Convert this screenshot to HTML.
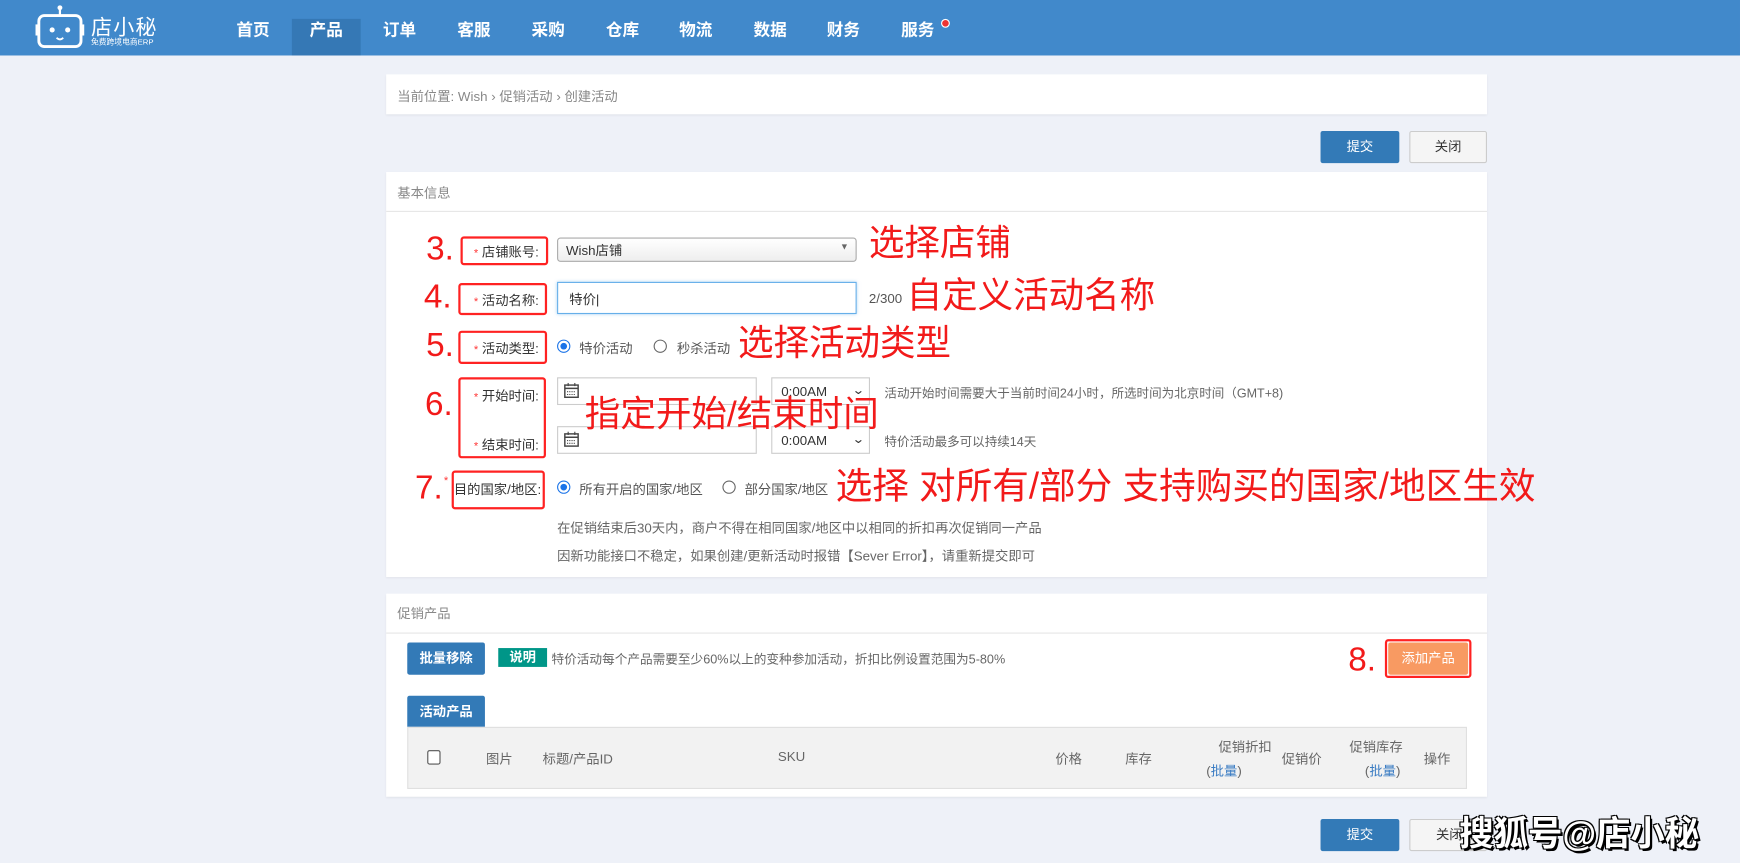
<!DOCTYPE html>
<html><head><meta charset="utf-8"><style>
*{box-sizing:border-box;margin:0;padding:0}
html,body{width:1740px;height:863px;overflow:hidden;background:#eef1f8;font-family:"Liberation Sans","Noto Sans CJK SC",sans-serif}
#w{position:absolute;left:0;top:0;width:1568px;height:778px;transform:scale(1.10969);transform-origin:0 0;background:#eef1f8}
.a{position:absolute;white-space:nowrap}
.hd{left:0;top:0;width:1568px;height:50px;background:#4189cb}
.nav{top:16px;color:#fff;font-size:15px;font-weight:bold}
.panel{background:#fff;position:absolute;left:348px;width:992px;box-shadow:0 1px 2px rgba(0,0,0,.06)}
.g{color:#888;font-size:12px}
.t{color:#555;font-size:12px}
.rb{position:absolute;border:2px solid #f22;border-radius:3px}
.ann{color:#f21a1a;font-size:32px;line-height:1}
.num{color:#f21a1a;font-size:30px;line-height:1}
.lab{font-size:12px;color:#333}
.lab b{color:#f33;font-weight:normal;font-size:10px}
.btn{position:absolute;font-size:12px;text-align:center;border-radius:2px}
.radio{position:absolute;width:12px;height:12px;border-radius:50%;border:1px solid #666;background:#fff}
.radio.on{border:1px solid #1a73e8}
.radio.on:after{content:"";position:absolute;left:2px;top:2px;width:6px;height:6px;border-radius:50%;background:#1a73e8}
.inp{position:absolute;border:1px solid #ccc;background:#fff}
.th{position:absolute;top:34px;font-size:12px;color:#666}
</style></head><body><div id="w">
<div class="a hd"></div>
<svg class="a" style="left:32px;top:3px" width="44" height="42" viewBox="0 0 44 42"><circle cx="22" cy="4" r="2.2" fill="#fff"/><line x1="22" y1="6" x2="22" y2="11" stroke="#fff" stroke-width="2"/><rect x="3" y="11" width="38" height="28" rx="5" fill="none" stroke="#fff" stroke-width="2.6"/><rect x="0" y="19" width="3" height="10" fill="#fff"/><rect x="41" y="19" width="3" height="10" fill="#fff"/><circle cx="15" cy="24" r="2.3" fill="#fff"/><circle cx="29" cy="24" r="2.3" fill="#fff"/><path d="M19 31 Q22 34 25 31" stroke="#fff" stroke-width="1.6" fill="none"/></svg>
<div class="a" style="left:82px;top:10px;color:#fff;font-size:19px;letter-spacing:1px">店小秘</div>
<div class="a" style="left:82px;top:33px;color:#fff;font-size:7px">免费跨境电商ERP</div>
<div class="a" style="left:263px;top:17px;width:62px;height:33px;background:#3578b5"></div>
<div class="a nav" style="left:213px">首页</div><div class="a nav" style="left:279px">产品</div><div class="a nav" style="left:345px">订单</div><div class="a nav" style="left:412px">客服</div><div class="a nav" style="left:479px">采购</div><div class="a nav" style="left:546px">仓库</div><div class="a nav" style="left:612px">物流</div><div class="a nav" style="left:679px">数据</div><div class="a nav" style="left:745px">财务</div><div class="a nav" style="left:812px">服务</div>
<div class="a" style="left:848px;top:17px;width:8px;height:8px;border-radius:50%;background:#e33;border:1px solid #fff"></div>

<div class="panel" style="top:67px;height:36px"><div class="a g" style="left:10px;top:11px">当前位置: Wish › 促销活动 › 创建活动</div></div>
<div class="btn" style="left:1190px;top:118px;width:71px;height:29px;background:#337ab7;color:#fff;line-height:29px">提交</div>
<div class="btn" style="left:1270px;top:118px;width:70px;height:29px;background:#f5f5f5;border:1px solid #ccc;color:#333;line-height:27px">关闭</div>

<div class="panel" style="top:155px;height:365px">
<div class="a g" style="left:10px;top:10px">基本信息</div>
<div class="a" style="left:0;top:35px;width:992px;height:1px;background:#e6e6e6"></div>
</div>
<!-- row 3 -->
<div class="a num" style="left:384px;top:210px">3.</div>
<div class="rb" style="left:415px;top:213px;width:79px;height:26px"></div>
<div class="a lab" style="left:427px;top:218px"><b>*</b> 店铺账号:</div>
<div class="inp" style="left:502px;top:214px;width:270px;height:22px;border-radius:3px;background:linear-gradient(#fff,#eee);border-color:#aaa"></div>
<div class="a" style="left:510px;top:217px;font-size:12px;color:#333">Wish店铺</div>
<div class="a" style="left:757px;top:218px;font-size:8px;color:#666">▼</div>
<div class="a ann" style="left:783px;top:203px">选择店铺</div>
<!-- row 4 -->
<div class="a num" style="left:382px;top:253px">4.</div>
<div class="rb" style="left:413px;top:255px;width:80px;height:29px"></div>
<div class="a lab" style="left:427px;top:262px"><b>*</b> 活动名称:</div>
<div class="inp" style="left:502px;top:254px;width:270px;height:29px;border-color:#66afe9;box-shadow:0 0 3px rgba(102,175,233,.6)"></div>
<div class="a" style="left:513px;top:261px;font-size:12px;color:#333">特价|</div>
<div class="a t" style="left:783px;top:262px">2/300</div>
<div class="a ann" style="left:817px;top:250px">自定义活动名称</div>
<!-- row 5 -->
<div class="a num" style="left:384px;top:297px">5.</div>
<div class="rb" style="left:413px;top:298px;width:80px;height:30px"></div>
<div class="a lab" style="left:427px;top:305px"><b>*</b> 活动类型:</div>
<div class="radio on" style="left:502px;top:306px"></div><div class="a t" style="left:522px;top:305px">特价活动</div>
<div class="radio" style="left:589px;top:306px"></div><div class="a t" style="left:610px;top:305px">秒杀活动</div>
<div class="a ann" style="left:665px;top:293px">选择活动类型</div>
<!-- row 6 -->
<div class="a num" style="left:383px;top:350px">6.</div>
<div class="rb" style="left:413px;top:340px;width:79px;height:73px"></div>
<div class="a lab" style="left:427px;top:348px"><b>*</b> 开始时间:</div>
<div class="a lab" style="left:427px;top:392px"><b>*</b> 结束时间:</div>
<div class="inp" style="left:502px;top:340px;width:180px;height:25px"></div>
<div class="inp" style="left:502px;top:384px;width:180px;height:25px"></div>
<svg class="a" style="left:508px;top:345px" width="14" height="14" viewBox="0 0 14 14"><rect x="1" y="2" width="12" height="11" fill="none" stroke="#444" stroke-width="1.3"/><line x1="1" y1="5" x2="13" y2="5" stroke="#444" stroke-width="1.3"/><line x1="4" y1="0" x2="4" y2="3" stroke="#444"/><line x1="10" y1="0" x2="10" y2="3" stroke="#444"/><path d="M3 8h8M3 10.5h8" stroke="#444" stroke-dasharray="1 1"/></svg>
<svg class="a" style="left:508px;top:389px" width="14" height="14" viewBox="0 0 14 14"><rect x="1" y="2" width="12" height="11" fill="none" stroke="#444" stroke-width="1.3"/><line x1="1" y1="5" x2="13" y2="5" stroke="#444" stroke-width="1.3"/><line x1="4" y1="0" x2="4" y2="3" stroke="#444"/><line x1="10" y1="0" x2="10" y2="3" stroke="#444"/><path d="M3 8h8M3 10.5h8" stroke="#444" stroke-dasharray="1 1"/></svg>
<div class="inp" style="left:695px;top:340px;width:89px;height:25px"></div>
<div class="inp" style="left:695px;top:384px;width:89px;height:25px"></div>
<div class="a" style="left:704px;top:346px;font-size:12px;color:#333">0:00AM</div>
<div class="a" style="left:704px;top:390px;font-size:12px;color:#333">0:00AM</div>
<div class="a" style="left:769px;top:345px;font-size:11px;color:#333;transform:scaleX(1.3)">⌄</div>
<div class="a" style="left:769px;top:389px;font-size:11px;color:#333;transform:scaleX(1.3)">⌄</div>
<div class="a" style="left:797px;top:346px;font-size:11.3px;color:#666">活动开始时间需要大于当前时间24小时，所选时间为北京时间（GMT+8)</div>
<div class="a" style="left:797px;top:390px;font-size:11.3px;color:#666">特价活动最多可以持续14天</div>
<div class="a ann" style="left:527px;top:357px">指定开始/结束时间</div>
<!-- row 7 -->
<div class="a num" style="left:374px;top:425px">7.</div>
<div class="a" style="left:400px;top:428px;color:#f33;font-size:10px">*</div>
<div class="rb" style="left:407px;top:424px;width:84px;height:35px"></div>
<div class="a lab" style="left:409px;top:432px">目的国家/地区:</div>
<div class="radio on" style="left:502px;top:433px"></div><div class="a t" style="left:522px;top:432px">所有开启的国家/地区</div>
<div class="radio" style="left:651px;top:433px"></div><div class="a t" style="left:671px;top:432px">部分国家/地区</div>
<div class="a ann" style="left:753px;top:421px;font-size:33px">选择 对所有/部分 支持购买的国家/地区生效</div>
<div class="a t" style="left:502px;top:467px;color:#666">在促销结束后30天内，商户不得在相同国家/地区中以相同的折扣再次促销同一产品</div>
<div class="a t" style="left:502px;top:492px;color:#666">因新功能接口不稳定，如果创建/更新活动时报错【Sever Error】，请重新提交即可</div>

<div class="panel" style="top:535px;height:183px">
<div class="a g" style="left:10px;top:9px">促销产品</div>
<div class="a" style="left:0;top:35px;width:992px;height:1px;background:#e6e6e6"></div>
</div>
<div class="btn" style="left:367px;top:579px;width:70px;height:29px;background:#337ab7;color:#fff;line-height:29px;font-weight:bold">批量移除</div>
<div class="btn" style="left:449px;top:584px;width:44px;height:17px;background:#009688;color:#fff;line-height:17px;border-radius:0;font-weight:bold">说明</div>
<div class="a" style="left:497px;top:586px;font-size:11.4px;color:#666">特价活动每个产品需要至少60%以上的变种参加活动，折扣比例设置范围为5-80%</div>
<div class="a num" style="left:1215px;top:580px">8.</div>
<div class="rb" style="left:1248px;top:576px;width:78px;height:35px"></div>
<div class="btn" style="left:1251px;top:579px;width:72px;height:29px;background:#f89a62;color:#fff;line-height:29px">添加产品</div>
<div class="btn" style="left:367px;top:627px;width:70px;height:28px;background:#337ab7;color:#fff;line-height:28px;border-radius:2px 2px 0 0;font-weight:bold">活动产品</div>
<div class="a" style="left:367px;top:655px;width:955px;height:56px;background:#f2f2f2;border:1px solid #e0e0e0">
<div class="a" style="left:17px;top:20px;width:12px;height:13px;border:1px solid #555;border-radius:2px;background:#fff"></div>
<div class="th" style="left:70px;top:19px">图片</div>
<div class="th" style="left:121px;top:19px">标题/产品ID</div>
<div class="th" style="left:333px;top:19px">SKU</div>
<div class="th" style="left:583px;top:19px">价格</div>
<div class="th" style="left:646px;top:19px">库存</div>
<div class="th" style="left:730px;top:8px">促销折扣</div>
<div class="th" style="left:719px;top:30px">(<span style="color:#3a7cc3">批量</span>)</div>
<div class="th" style="left:787px;top:19px">促销价</div>
<div class="th" style="left:848px;top:8px">促销库存</div>
<div class="th" style="left:862px;top:30px">(<span style="color:#3a7cc3">批量</span>)</div>
<div class="th" style="left:915px;top:19px">操作</div>
</div>
<div class="btn" style="left:1190px;top:738px;width:71px;height:29px;background:#337ab7;color:#fff;line-height:29px">提交</div>
<div class="btn" style="left:1270px;top:738px;width:70px;height:29px;background:#f5f5f5;border:1px solid #ccc;color:#333;line-height:27px;text-align:left;padding-left:23px">关闭</div>
<div class="a" style="left:1315px;top:726px;font-size:31px;color:#fff;font-weight:bold;text-shadow:1px 1px 0 #000,-1px 1px 0 #000,1px -1px 0 #000,-1px -1px 0 #000,2px 2px 0 #000">搜狐号@店小秘</div>
</div></body></html>
